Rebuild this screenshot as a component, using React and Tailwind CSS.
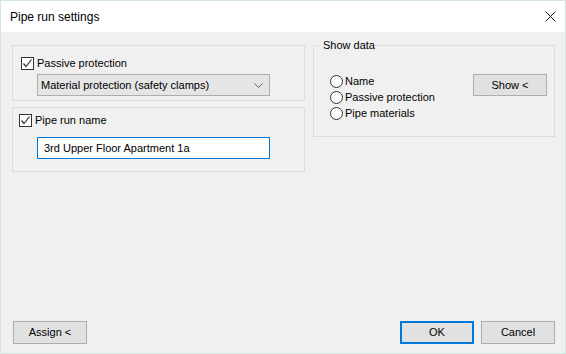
import React from "react";

const font = { fontFamily: '"Liberation Sans", Arial, sans-serif' };

const CheckBox = ({ label }) => (
  <div className="flex items-center h-[13px]">
    <span className="w-[13px] h-[13px] border border-[#333333] bg-white flex items-center justify-center shrink-0">
      <svg width="11" height="11" viewBox="0 0 11 11">
        <polyline points="1.5,5.5 4,8.5 9.5,1.5" fill="none" stroke="#333333" strokeWidth="1.2" />
      </svg>
    </span>
    <span className="ml-[3px] text-[11px] text-black leading-none">{label}</span>
  </div>
);

const Radio = ({ label }) => (
  <div className="flex items-center h-[16px]">
    <span className="w-[13px] h-[13px] rounded-full border border-[#333333] bg-white shrink-0" />
    <span className="ml-[2px] text-[11px] text-black leading-none">{label}</span>
  </div>
);

const Button = ({ children, primary }) => (
  <button
    className={`block w-[74px] h-[23px] bg-[#e1e1e1] text-[11px] text-black ${
      primary ? "border-2 border-[#0078d7]" : "border border-[#adadad]"
    }`}
  >
    {children}
  </button>
);

export default function App() {
  return (
    <div
      className="w-[566px] h-[354px] border border-[#d3e6e0] flex flex-col bg-[#f0f0f0]"
      style={font}
    >
      {/* title bar */}
      <div className="h-[31px] bg-white flex items-center justify-between pl-[9px] pr-[9px]">
        <span className="text-[12px] text-black">Pipe run settings</span>
        <svg width="11" height="11" viewBox="0 0 11 11">
          <path d="M0.5 0.5 L10.5 10.5 M10.5 0.5 L0.5 10.5" stroke="#111" strokeWidth="1" />
        </svg>
      </div>

      <div className="flex-1 flex flex-col pl-[11px] pr-[10px] pt-[13px] pb-[9px]">
        <div className="flex items-start gap-[8px]">
          {/* left column */}
          <div className="w-[293px] flex flex-col gap-[6px]">
            <div className="h-[56px] border border-[#dcdcdc] pl-[8px] pt-[11px]">
              <CheckBox label="Passive protection" />
              <div className="ml-[16px] mt-[4px] w-[233px] h-[22px] bg-[#e5e5e5] border border-[#adadad] flex items-center justify-between pl-[3px] pr-[6px]">
                <span className="text-[11px] text-black">Material protection (safety clamps)</span>
                <svg width="9" height="5" viewBox="0 0 9 5">
                  <polyline points="0.5,0.5 4.5,4.5 8.5,0.5" fill="none" stroke="#606060" strokeWidth="1" />
                </svg>
              </div>
            </div>
            <div className="h-[65px] border border-[#dcdcdc] pl-[6px] pt-[6px]">
              <CheckBox label="Pipe run name" />
              <div className="ml-[18px] mt-[10px] w-[233px] h-[22px] bg-white border border-[#0078d7] flex items-center pl-[6px]">
                <span className="text-[11px] text-black">3rd Upper Floor Apartment 1a</span>
              </div>
            </div>
          </div>

          {/* right column */}
          <div className="relative w-[242px] h-[92px] border border-[#dcdcdc] flex items-start justify-between pl-[16px] pr-[7px] pt-[28px]">
            <span className="absolute left-[7px] top-[-7px] px-[2px] bg-[#f0f0f0] text-[11px] leading-[13px] text-black">
              Show data
            </span>
            <div className="flex flex-col -mt-[1px]">
              <Radio label="Name" />
              <Radio label="Passive protection" />
              <Radio label="Pipe materials" />
            </div>
            <button className="block w-[74px] h-[22px] bg-[#e1e1e1] border border-[#adadad] text-[11px] text-black">
              Show &lt;
            </button>
          </div>
        </div>

        <div className="flex-1" />

        <div className="flex items-end justify-between">
          <div className="ml-[1px]">
            <Button>Assign &lt;</Button>
          </div>
          <div className="flex gap-[7px]">
            <Button primary>OK</Button>
            <Button>Cancel</Button>
          </div>
        </div>
      </div>
    </div>
  );
}
